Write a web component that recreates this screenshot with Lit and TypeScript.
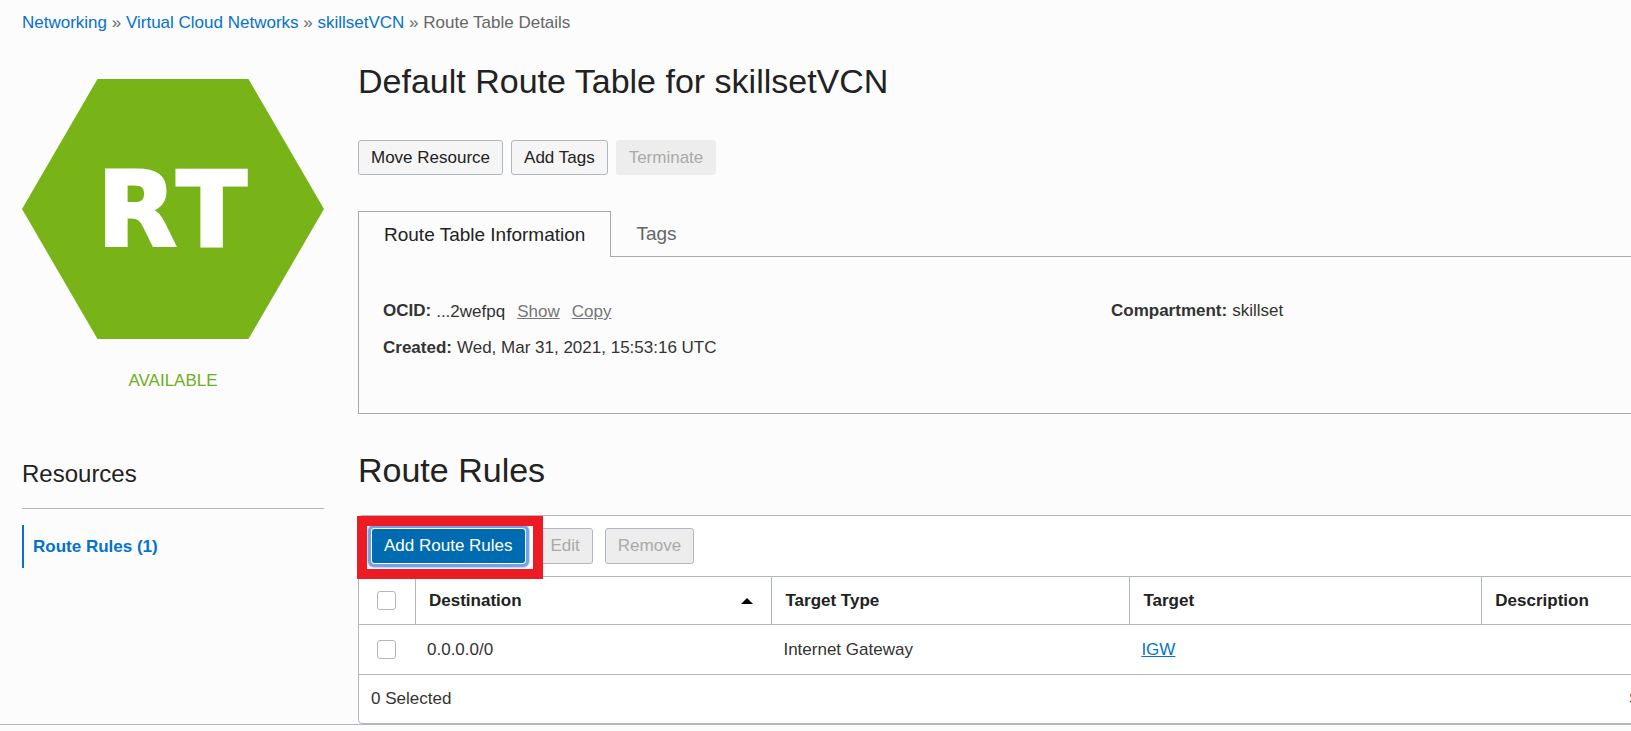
import { LitElement, html, css } from "lit";
import { customElement, state } from "lit/decorators.js";

interface RouteRule {
  destination: string;
  targetType: string;
  target: string;
  description: string;
}

@customElement("resource-hexagon")
class ResourceHexagon extends LitElement {
  static styles = css`
    :host {
      display: block;
    }
    .hexagon {
      display: block;
      width: 100%;
    }
    .shape {
      fill: #78b417;
    }
    .initials {
      fill: #fff;
      stroke: #fff;
      stroke-width: 3px;
      font-family: "DejaVu Sans", Verdana, sans-serif;
      font-weight: 700;
      font-size: 103px;
      font-kerning: none;
      text-anchor: middle;
    }
  `;

  render() {
    return html`
      <svg class="hexagon" viewBox="0 0 302 260" role="img" aria-label="Route table">
        <polygon class="shape" points="0,130 75.5,0 226.5,0 302,130 226.5,260 75.5,260"></polygon>
        <text class="initials" x="150" y="167">RT</text>
      </svg>
    `;
  }
}

@customElement("app-root")
class AppRoot extends LitElement {
  static styles = css`
    :host {
      display: block;
      font-family: "Liberation Sans", Arial, sans-serif;
      font-size: 17px;
      line-height: 20px;
      color: #333;
    }
    * {
      box-sizing: border-box;
    }
    .page {
      min-height: 100vh;
      overflow: hidden;
      background: #fcfcfc;
    }
    a {
      color: #0572ce;
      text-decoration: none;
    }
    .breadcrumb {
      padding: 13px 22px 0;
      color: #666;
    }
    .layout {
      display: grid;
      grid-template-columns: 302px minmax(0, 1fr);
      column-gap: 34px;
      padding-left: 22px;
    }
    .side {
      padding-top: 46px;
    }
    .status {
      margin-top: 32px;
      text-align: center;
      color: #6fae1c;
    }
    h1,
    h2,
    h3 {
      margin: 0;
      font-weight: 400;
      color: #222;
    }
    h1,
    h2 {
      font-size: 34px;
      line-height: 40px;
    }
    h3 {
      margin-top: 69px;
      padding-bottom: 20px;
      border-bottom: 1px solid #b0b7c0;
      font-size: 24px;
      line-height: 28px;
    }
    .side-link {
      display: block;
      margin-top: 16px;
      padding: 12px 9px 11px;
      border-left: 2px solid #0572ce;
      font-weight: 700;
    }
    /* The main column runs past the right side of the window. */
    .main {
      margin-right: -233px;
      padding-top: 28px;
    }
    .actions {
      display: flex;
      gap: 8px;
      margin: 39px 0 36px;
    }
    .btn {
      height: 35px;
      padding: 0 12px;
      border: 1px solid #b0b7c0;
      border-radius: 3px;
      background: #f5f5f5;
      color: #222;
      font: inherit;
    }
    .btn:disabled {
      background: #ededed;
      color: #aaa;
    }
    .plain:disabled {
      border-color: #ededed;
    }
    .tabs {
      display: flex;
    }
    .tab {
      height: 46px;
      padding: 0 25px;
      border: 0;
      border-bottom: 1px solid #a9a9a9;
      background: none;
      font: inherit;
      font-size: 19px;
      color: #666;
    }
    .active {
      border: 1px solid #a9a9a9;
      border-bottom: 0;
      color: #222;
    }
    .tabs-rest {
      flex: 1;
      border-bottom: 1px solid #a9a9a9;
    }
    .panel {
      display: grid;
      grid-template-columns: 1fr 1fr;
      padding: 42px 24px 53px;
      border: 1px solid #a9a9a9;
      border-top: 0;
    }
    .facts {
      display: flex;
      flex-direction: column;
      gap: 13px;
    }
    .fact {
      display: flex;
      align-items: center;
      gap: 5px;
      line-height: 24px;
    }
    .ocid {
      display: flex;
      gap: 12px;
      padding-top: 1px;
      margin-bottom: -1px;
    }
    .quiet {
      color: #767676;
      text-decoration: underline;
    }
    .section-title {
      margin: 36px 0 25px;
    }
    .rules {
      border: 1px solid #b0b7c0;
      border-radius: 4px;
      background: #fff;
    }
    .toolbar {
      position: relative;
      display: flex;
      gap: 12px;
      padding: 12px;
      border-bottom: 1px solid #b0b7c0;
    }
    .toolbar .btn {
      height: 36px;
    }
    .toolbar .primary {
      border-color: #fff;
      background: #006bb0;
      background-clip: padding-box;
      color: #fff;
      box-shadow: 0 0 0 3px #72a4e4, 0 0 0 4px #c3d8f4;
    }
    .highlight {
      position: absolute;
      top: 0;
      left: -2px;
      width: 186px;
      height: 63px;
      border: 10px solid #ed1c24;
      pointer-events: none;
    }
    table {
      width: 100%;
      table-layout: fixed;
      border-collapse: separate;
      border-spacing: 0;
      text-align: left;
    }
    .col-check {
      width: 57px;
    }
    .col-destination {
      width: 23.7%;
    }
    .col-type {
      width: 23.8%;
    }
    .col-target {
      width: 23.4%;
    }
    th {
      height: 48px;
      padding: 0 18px 0 13px;
      border-right: 1px solid #b0b7c0;
      border-bottom: 1px solid #b0b7c0;
      color: #222;
    }
    th:last-child {
      border-right: 0;
    }
    td {
      height: 50px;
      padding: 0 11px;
      border-bottom: 1px solid #b0b7c0;
    }
    .check {
      padding: 0 18px;
    }
    .box {
      display: block;
      width: 19px;
      height: 19px;
      margin: 0;
      appearance: none;
      border: 1px solid #b0b7c0;
      border-radius: 3px;
      background: #fff;
    }
    .box:checked {
      background: #006bb0;
    }
    .sortable {
      display: flex;
      align-items: center;
      justify-content: space-between;
    }
    .arrow {
      width: 12px;
      height: 6px;
    }
    .target-link {
      text-decoration: underline;
    }
    .summary {
      display: flex;
      justify-content: space-between;
      padding: 14px 12px;
    }
    .paging {
      width: 222px;
    }
    .footer {
      border-top: 1px solid #b0b7c0;
    }
  `;

  @state() private rules: RouteRule[] = [
    { destination: "0.0.0.0/0", targetType: "Internet Gateway", target: "IGW", description: "" },
  ];

  render() {
    return html`
      <div class="page">
        <nav class="breadcrumb" aria-label="Breadcrumb">
          <a href="#">Networking</a> » <a href="#">Virtual Cloud Networks</a> »
          <a href="#">skillsetVCN</a> » <span>Route Table Details</span>
        </nav>
        <div class="layout">
          <aside class="side">
            <resource-hexagon></resource-hexagon>
            <div class="status">AVAILABLE</div>
            <h3>Resources</h3>
            <a class="side-link" href="#">Route Rules (${this.rules.length})</a>
          </aside>
          <main class="main">
            <h1>Default Route Table for skillsetVCN</h1>
            <div class="actions">
              <button class="btn">Move Resource</button>
              <button class="btn">Add Tags</button>
              <button class="btn plain" disabled>Terminate</button>
            </div>
            <div class="tabs" role="tablist">
              <button class="tab active" role="tab" aria-selected="true">Route Table Information</button>
              <button class="tab" role="tab" aria-selected="false">Tags</button>
              <div class="tabs-rest" role="presentation"></div>
            </div>
            <section class="panel" role="tabpanel">
              <div class="facts">
                <div class="fact">
                  <strong>OCID:</strong>
                  <div class="ocid">
                    <span>...2wefpq</span>
                    <a class="quiet" href="#">Show</a>
                    <a class="quiet" href="#">Copy</a>
                  </div>
                </div>
                <div class="fact"><strong>Created:</strong><span>Wed, Mar 31, 2021, 15:53:16 UTC</span></div>
              </div>
              <div class="facts">
                <div class="fact"><strong>Compartment:</strong><span>skillset</span></div>
              </div>
            </section>
            <h2 class="section-title">Route Rules</h2>
            <section class="rules">
              <div class="toolbar">
                <button class="btn primary">Add Route Rules</button>
                <button class="btn" disabled>Edit</button>
                <button class="btn" disabled>Remove</button>
                <div class="highlight"></div>
              </div>
              <table>
                <colgroup>
                  <col class="col-check" />
                  <col class="col-destination" />
                  <col class="col-type" />
                  <col class="col-target" />
                  <col />
                </colgroup>
                <thead>
                  <tr>
                    <th class="check"><input class="box" type="checkbox" aria-label="Select all rules" /></th>
                    <th aria-sort="ascending">
                      <div class="sortable">
                        Destination
                        <svg class="arrow" viewBox="0 0 12 6" aria-hidden="true"><path d="M0 6 6 0l6 6z"></path></svg>
                      </div>
                    </th>
                    <th>Target Type</th>
                    <th>Target</th>
                    <th>Description</th>
                  </tr>
                </thead>
                <tbody>
                  ${this.rules.map(
                    (rule) => html`
                      <tr>
                        <td class="check">
                          <input class="box" type="checkbox" aria-label="Select ${rule.destination}" />
                        </td>
                        <td>${rule.destination}</td>
                        <td>${rule.targetType}</td>
                        <td><a class="target-link" href="#">${rule.target}</a></td>
                        <td>${rule.description}</td>
                      </tr>
                    `
                  )}
                </tbody>
              </table>
              <div class="summary">
                <span>0 Selected</span>
                <span class="paging">Showing 1 Item</span>
              </div>
            </section>
          </main>
        </div>
        <footer class="footer"></footer>
      </div>
    `;
  }
}
